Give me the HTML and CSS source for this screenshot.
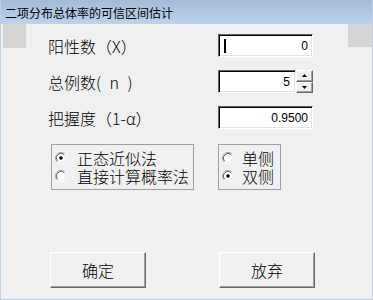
FILE: index.html
```html
<!DOCTYPE html>
<html>
<head>
<meta charset="utf-8">
<link rel="stylesheet" href="styles.css">
</head>
<body>
<div class="window">
  <div class="titlebar">二项分布总体率的可信区间估计</div>
  <div class="client">
    <div class="corner corner-left"></div>
    <div class="main">
      <div class="fields">
        <div class="label">阳性数（X）</div>
        <div class="edit"><span class="caret"></span><span class="value">0</span></div>
        <div class="label label-n">总例数( n )</div>
        <div class="spinbox">
          <div class="edit edit-spin"><span class="value">5</span></div>
          <div class="spinner">
            <div class="spin-btn"><svg width="5" height="3" viewBox="0 0 5 3"><polygon points="0,3 2.5,0 5,3" fill="#000"/></svg></div>
            <div class="spin-btn"><svg width="5" height="3" viewBox="0 0 5 3"><polygon points="0,0 5,0 2.5,3" fill="#000"/></svg></div>
          </div>
        </div>
        <div class="label">把握度（1-α）</div>
        <div class="edit"><span class="value">0.9500</span></div>
      </div>
      <div class="groups">
        <div class="group group-method">
          <div class="radio-row">
            <svg class="radio" width="12" height="12" viewBox="0 0 12 12"><circle cx="6" cy="6" r="5" fill="#fff"/><path d="M2.11 9.89 A5.5 5.5 0 0 1 9.89 2.11" fill="none" stroke="#a0a0a0"/><path d="M9.89 2.11 A5.5 5.5 0 0 1 2.11 9.89" fill="none" stroke="#fff"/><path d="M2.82 9.18 A4.5 4.5 0 0 1 9.18 2.82" fill="none" stroke="#696969"/><path d="M9.18 2.82 A4.5 4.5 0 0 1 2.82 9.18" fill="none" stroke="#e3e3e3"/><circle cx="6" cy="6" r="1.8" fill="#000"/></svg>
            <span class="radio-text">正态近似法</span>
          </div>
          <div class="radio-row">
            <svg class="radio" width="12" height="12" viewBox="0 0 12 12"><circle cx="6" cy="6" r="5" fill="#fff"/><path d="M2.11 9.89 A5.5 5.5 0 0 1 9.89 2.11" fill="none" stroke="#a0a0a0"/><path d="M9.89 2.11 A5.5 5.5 0 0 1 2.11 9.89" fill="none" stroke="#fff"/><path d="M2.82 9.18 A4.5 4.5 0 0 1 9.18 2.82" fill="none" stroke="#696969"/><path d="M9.18 2.82 A4.5 4.5 0 0 1 2.82 9.18" fill="none" stroke="#e3e3e3"/></svg>
            <span class="radio-text">直接计算概率法</span>
          </div>
        </div>
        <div class="group group-side">
          <div class="radio-row">
            <svg class="radio" width="12" height="12" viewBox="0 0 12 12"><circle cx="6" cy="6" r="5" fill="#fff"/><path d="M2.11 9.89 A5.5 5.5 0 0 1 9.89 2.11" fill="none" stroke="#a0a0a0"/><path d="M9.89 2.11 A5.5 5.5 0 0 1 2.11 9.89" fill="none" stroke="#fff"/><path d="M2.82 9.18 A4.5 4.5 0 0 1 9.18 2.82" fill="none" stroke="#696969"/><path d="M9.18 2.82 A4.5 4.5 0 0 1 2.82 9.18" fill="none" stroke="#e3e3e3"/></svg>
            <span class="radio-text">单侧</span>
          </div>
          <div class="radio-row">
            <svg class="radio" width="12" height="12" viewBox="0 0 12 12"><circle cx="6" cy="6" r="5" fill="#fff"/><path d="M2.11 9.89 A5.5 5.5 0 0 1 9.89 2.11" fill="none" stroke="#a0a0a0"/><path d="M9.89 2.11 A5.5 5.5 0 0 1 2.11 9.89" fill="none" stroke="#fff"/><path d="M2.82 9.18 A4.5 4.5 0 0 1 9.18 2.82" fill="none" stroke="#696969"/><path d="M9.18 2.82 A4.5 4.5 0 0 1 2.82 9.18" fill="none" stroke="#e3e3e3"/><circle cx="6" cy="6" r="1.8" fill="#000"/></svg>
            <span class="radio-text">双侧</span>
          </div>
        </div>
      </div>
      <div class="buttons">
        <div class="btn btn-ok">确定</div>
        <div class="btn btn-cancel">放弃</div>
      </div>
    </div>
    <div class="corner corner-right"></div>
  </div>
</div>
</body>
</html>
```
FILE: styles.css
```css
* { box-sizing: border-box; }
html, body { margin: 0; padding: 0; }
body {
  font-family: "Noto Sans CJK SC", "Liberation Sans", sans-serif;
  font-weight: 300;
  color: #000;
  background: #f0f0f0;
}
.window {
  width: 373px;
  height: 300px;
  display: flex;
  flex-direction: column;
  background: #f0f0f0;
  border-left: 1px solid #b9d1ea;
  border-right: 1px solid #b9d1ea;
  border-bottom: 1px solid #b9d1ea;
}
.titlebar {
  height: 24px;
  flex: none;
  padding-left: 4px;
  padding-top: 2px;
  font-size: 12px;
  font-weight: 400;
  line-height: 22px;
  background: linear-gradient(#a3bbd6, #bcd3ec);
  white-space: nowrap;
}
.client {
  flex: 1;
  display: flex;
  align-items: flex-start;
}
.corner {
  flex: none;
  background: #d4d4d4;
}
.corner-left {
  width: 23px;
  height: 24px;
  margin-left: 2px;
}
.corner-right {
  width: 24px;
  height: 23px;
}
.main {
  flex: 1;
  margin-left: 22px;
  padding-top: 10px;
}
.fields {
  display: grid;
  grid-template-columns: 170px 95px;
  grid-auto-rows: 23px;
  row-gap: 13px;
  align-items: center;
}
.label {
  font-size: 16px;
  line-height: 20px;
  white-space: pre;
}
.label-n { word-spacing: 5px; }
.edit {
  height: 23px;
  display: flex;
  align-items: center;
  justify-content: space-between;
  background: #fff;
  border-top: 1px solid #646464;
  border-left: 1px solid #646464;
  border-right: 1px solid #fff;
  border-bottom: 1px solid #fff;
  box-shadow: inset 1px 1px 0 #000, inset -1px -1px 0 #e3e3e3;
  padding: 0 4px 0 5px;
  font-family: "Liberation Sans", sans-serif;
  font-weight: 400;
  font-size: 12px;
}
.value { margin-left: auto; }
.caret {
  width: 2px;
  height: 14px;
  background: #000;
}
.spinbox {
  display: flex;
  height: 23px;
}
.edit-spin {
  width: 78px;
  padding-right: 5px;
}
.spinner {
  width: 17px;
  display: flex;
  flex-direction: column;
}
.spin-btn {
  flex: 1;
  display: flex;
  align-items: center;
  justify-content: center;
  background: #f0f0f0;
  border-top: 1px solid #fff;
  border-left: 1px solid #fff;
  border-right: 1px solid #696969;
  border-bottom: 1px solid #696969;
  box-shadow: inset -1px -1px 0 #a0a0a0;
}
.spin-btn svg { display: block; }
.groups {
  display: flex;
  margin-top: 15px;
}
.group {
  height: 46px;
  border: 1px solid #a0a0a0;
  padding: 4px 0 4px 3px;
}
.group-method {
  width: 143px;
  margin-left: 3px;
}
.group-side {
  width: 63px;
  margin-left: 24px;
}
.radio-row {
  height: 18px;
  display: flex;
  align-items: center;
}
.radio { flex: none; display: block; }
.radio-text {
  font-size: 16px;
  line-height: 18px;
  white-space: nowrap;
}
.group-method .radio-text { margin-left: 10px; }
.group-side .radio-text { margin-left: 8px; }
.buttons {
  display: flex;
  margin-top: 62px;
}
.btn {
  width: 96px;
  height: 36px;
  display: flex;
  align-items: center;
  justify-content: center;
  font-size: 16px;
  background: #f0f0f0;
  border-top: 1px solid #fff;
  border-left: 1px solid #fff;
  border-right: 1px solid #696969;
  border-bottom: 1px solid #696969;
  box-shadow: inset -1px -1px 0 #a0a0a0;
}
.btn-ok { margin-left: 2px; }
.btn-cancel { margin-left: 73px; }
```
